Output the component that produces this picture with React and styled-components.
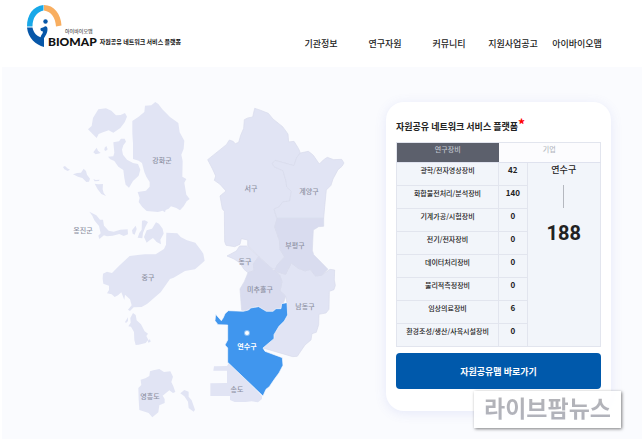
import React from 'react';
import styled, { createGlobalStyle } from 'styled-components';


const GlobalStyle = createGlobalStyle`
    * {
        box-sizing: border-box;
    }

    body {
        margin: 0;
        background: #fff;
        color: #222;
        font-family: "Noto Sans CJK KR", "Noto Sans", sans-serif;
    }
`;

const Header = styled.header`
    display: flex;
    justify-content: space-between;
    align-items: flex-start;
    padding: 5px 34px 0 27px;
    height: 67px;
`;

const Logo = styled.a`
    display: flex;
    align-items: flex-end;
    color: #111;
    text-decoration: none;

    svg {
        flex: none;
        width: 35px;
        height: 42px;
        margin-right: -14px;
    }
`;

const LogoText = styled.span`
    display: flex;
    flex-direction: column;
`;

const LogoSub = styled.span`
    padding-left: 17px;
    font-size: 5px;
    line-height: 10px;
`;

const LogoName = styled.span`
    display: flex;
    align-items: center;
    gap: 3px;
    font-family: Lato, sans-serif;
    font-size: 12px;
    font-weight: 900;
    line-height: 11px;
`;

const Tagline = styled.span`
    font-family: "Noto Sans CJK KR", sans-serif;
    font-size: 6px;
    font-weight: 700;
    white-space: nowrap;
`;

const Nav = styled.nav`
    display: flex;
    padding-top: 32px;
`;

const NavLink = styled.a`
    width: 64px;
    font-size: 9px;
    font-weight: 500;
    line-height: 14px;
    text-align: center;
    white-space: nowrap;
    color: #222;
    text-decoration: none;
`;

const Main = styled.main`
    display: flex;
    justify-content: space-between;
    align-items: flex-start;
    gap: 32px;
    margin: 0 1px 0 2px;
    padding: 35px 31px 19px 58px;
    background: #fafbfe;
`;

const Map = styled.svg`
    flex: 0 1 286px;
    min-width: 0;
    height: auto;
    overflow: visible;
`;

const Area = styled.path`
    fill: ${({ tone }) => tone || '#e1e4f4'};
    stroke: ${({ edge }) => edge || 'none'};
    stroke-width: 2;
    stroke-linejoin: round;
`;

const AreaName = styled.text`
    fill: ${({ $active }) => ($active ? '#fff' : '#8d91a3')};
    font-size: 7px;
    font-weight: ${({ $active }) => ($active ? 700 : 500)};
    text-anchor: middle;
    dominant-baseline: central;
`;

const Side = styled.div`
    position: relative;
    flex: 0 0 225px;
`;

const Card = styled.section`
    padding: 17px 10px 22px;
    border-radius: 18px;
    background: #fff;
    box-shadow: 0 2px 12px rgba(90, 110, 220, 0.13);
`;

const Title = styled.h2`
    margin: 0 0 7px;
    font-size: 9px;
    font-weight: 700;
    line-height: 16px;
    white-space: nowrap;

    span {
        font-size: 14px;
        line-height: 8px;
        color: #f00;
    }
`;

const Table = styled.table`
    width: 100%;
    table-layout: fixed;
    border-collapse: collapse;
    border: 1px solid #e2e5ee;
    background: #f2f5fa;
    line-height: 12px;
    text-align: center;
`;

const Tab = styled.th`
    height: 20px;
    padding: 0;
    border-bottom: 1px solid #dfe2ee;
    background: ${({ $active }) => ($active ? '#5c606c' : '#fcfcfe')};
    vertical-align: top;

    button {
        display: block;
        width: 100%;
        padding: 0;
        border: 0;
        background: none;
        color: ${({ $active }) => ($active ? '#c0c4ce' : '#b6bac2')};
        font-family: inherit;
        font-size: 7px;
        font-weight: 500;
        line-height: 12px;
    }
`;

const Name = styled.th`
    height: 23px;
    padding: 1px 0 0;
    border: 1px solid #e2e5ee;
    font-size: 7px;
    font-weight: 500;
    white-space: nowrap;
    vertical-align: top;
`;

const Count = styled.td`
    padding: 1px 0 0;
    border: 1px solid #e2e5ee;
    font-size: 8px;
    font-weight: 700;
    vertical-align: top;
`;

const Summary = styled.td`
    padding: 0;
    vertical-align: top;
`;

const District = styled.div`
    font-size: 9px;
    font-weight: 500;
    line-height: 14px;

    &:after {
        content: "";
        display: block;
        width: 1px;
        height: 23px;
        margin: 8px auto 14px;
        background: #b5b8bf;
    }
`;

const Total = styled.strong`
    display: block;
    font-family: Roboto, sans-serif;
    font-size: 20px;
    line-height: 22px;
`;

const MapButton = styled.button`
    display: block;
    width: 100%;
    height: 36px;
    margin-top: 6px;
    padding: 0;
    border: 0;
    border-radius: 4px;
    background: #0059ab;
    color: #fff;
    font-family: inherit;
    font-size: 9px;
    font-weight: 700;
`;

const Watermark = styled.div`
    position: absolute;
    right: -10px;
    bottom: -17px;
    width: 147px;
    height: 37px;
    background: rgba(255, 255, 255, 0.9);
    box-shadow: 1px 1px 3px rgba(0, 0, 0, 0.5);
    text-align: center;

    span {
        background: linear-gradient(#b4b4b7, #b0b2bc);
        background-clip: text;
        color: transparent;
        font-size: 23px;
        font-weight: 700;
        line-height: 32px;
        white-space: nowrap;
    }
`;

const menu = ['기관정보', '연구자원', '커뮤니티', '지원사업공고', '아이바이오맵'];

const equipment = [
    ['광학/전자영상장비', 42],
    ['화합물전처리/분석장비', 140],
    ['기계가공/시험장비', 0],
    ['전기/전자장비', 0],
    ['데이터처리장비', 0],
    ['물리적측정장비', 0],
    ['임상의료장비', 6],
    ['환경조성/생산/사육시설장비', 0]
];

const islands = [
    // 강화군
    'M247 93L266 80L283 66L285 47L304 46L316 36L325 42L337 58L360 81L385 99L389 127L403 152L401 176L394 194L398 213L397 260L409 267L403 278L409 314L419 327L410 334L401 349L390 361L379 354L363 349L356 356L347 360L345 367L338 362L324 366L290 363L277 351L266 336L269 324L263 306L288 302L299 290L299 276L289 260L283 246L276 219L266 212L249 207L249 160L247 130Z',
    'M114 118L125 108L129 84L145 58L168 55L184 62L198 76L212 75L225 69L231 80L224 97L211 114L190 128L176 121L159 127L146 132L140 144L128 132Z',
    'M190 157L207 154L213 146L224 146L228 155L220 166L216 179L219 194L231 209L249 219L264 222L271 239L266 257L249 273L237 293L227 284L223 264L220 240L205 230L193 213L181 208L174 200L190 199L193 188Z',
    'M130 187L140 173L144 182L152 189L144 191L137 193Z',
    'M164 173L169 168L173 178L167 183L163 180Z',
    'M39 231L45 228L52 235L60 239L53 243L43 238Z',
    'M69 253L81 249L93 248L101 236L108 243L111 254L120 266L117 275L109 276L97 264L84 260Z',
    'M130 267L137 270L149 269L147 273L134 274Z',
    'M134 281L145 283L159 282L158 298L161 309L168 318L154 312L143 298Z',
    // 옹진군
    'M118 365L139 376L150 389L159 389L162 407L176 422L191 425L211 419L233 418L234 433L221 438L208 432L188 437L171 439L162 436L148 447L145 437L152 430L147 408L133 391L127 377Z',
    'M246 421L257 407L260 417L254 434L248 431Z',
    'M276 392L284 391L294 396L286 411L279 429L277 445L263 443L268 429L275 419Z',
    'M282 441L290 421L306 416L318 397L327 401L338 416L341 431L331 449L333 463L320 456L309 444L299 451L290 458Z',
    // 중구
    'M349 428L382 430L392 441L411 451L436 458L453 481L460 491L464 512L449 526L435 538L405 543L371 563L360 567L332 607L292 641L275 651L251 652L240 663L234 659L245 646L240 628L225 614L223 630L214 607L204 616L194 621L185 613L171 610L177 600L177 587L160 581L158 566L159 551L171 545L186 549L209 526L239 498L263 495L284 493L317 493L342 477L348 464Z',
    'M225 696L234 682L234 693L228 699Z',
    'M235 709L242 698L241 684L249 669L257 675L260 691L273 703L284 724L294 731L289 738L295 749L287 759L266 764L257 765L253 750L252 726L243 710Z',
    'M293 752L300 748L302 755L295 758Z',
    // 영흥도
    'M265 894L274 885L272 869L286 865L298 858L300 844L310 841L328 837L342 846L361 844L369 860L364 876L370 889L376 906L369 909L358 901L338 917L344 927L344 939L328 946L325 967L307 982L296 969L268 960L266 928Z',
    'M391 910L403 900L416 905L416 920L425 931L435 959L431 965L416 954L414 935L403 919Z'
];

const mainland = [
    // 서구
    { d: 'M53 209L109 164L118 150L129 154L136 161L146 157L152 136L161 115L163 89L173 84L188 81L194 55L207 59L235 70L249 87L278 110L294 132L296 156L312 154L326 176L331 189L320 203L312 227L255 211L247 221L252 230L279 242L288 273L290 291L304 304L299 333L278 336L267 351L252 357L261 388L254 411L268 450L270 478L284 501L263 523L258 538L247 537L206 499L173 467L173 450L154 446L150 463L134 470L108 466L104 455L103 364L97 357L90 318L108 303L89 282L73 271L77 258L67 236Z' },
    // 계양구
    { d: 'M331 189L355 184L363 190L370 196L388 222L401 209L412 202L431 209L455 208L462 219L456 229L444 239L429 267L423 286L409 300L404 351L401 385L261 385L252 357L267 351L278 336L299 333L304 304L290 291L288 273L279 242L252 230L247 221L255 211L312 227L320 203Z' },
    // 동구
    { d: 'M111 498L139 483L149 468L170 468L206 500L190 522L192 542L174 548L162 538L150 519L132 507Z' },
    // 남동구
    { d: 'M252 543L287 553L304 519L325 535L345 543L361 538L376 558L395 556L420 538L434 540L433 570L436 586L432 599L418 604L417 658L408 669L387 673L386 704L379 727L366 731L363 750L345 765L322 799L308 800L219 774L250 737L255 712L292 670L291 639L287 618L270 603L276 575L269 555Z' },
    // 부평구
    { d: 'M261 385L401 385L401 409L386 410L370 420L367 481L371 494L414 538L395 556L376 558L361 538L345 543L325 535L304 519L293 540L287 553L252 543L263 523L284 501L270 478L268 450L254 411Z', tone: '#d9dcef' },
    // 미추홀구
    { d: 'M174 548L192 542L190 522L206 500L247 537L269 555L276 575L270 603L287 618L275 658L255 660L249 669L228 665L204 652L179 656L170 664L155 661L150 597L163 575Z', tone: '#d9dcef' },
    // 송도
    { d: 'M72 829L111 828L118 816L216 918L216 927L204 937L185 934L167 936L134 936L120 930L120 918L61 918L61 880L111 879L111 842L70 842Z', edge: 'none' }
];

const yeonsu = 'M77 673L94 692L100 683L105 671L115 662L160 664L176 660L182 654L206 650L229 664L249 664L258 656L273 656L275 641L291 638L293 675L283 693L267 709L252 734L252 746L219 774L225 784L277 803L279 826L267 849L253 868L238 890L228 898L219 918L113 817L113 774L105 765L113 750L113 705L84 704L75 692Z';

const labels = [
    ['강화군', 162, 160],
    ['옹진군', 83, 230],
    ['중구', 148, 277],
    ['영흥도', 150, 396],
    ['서구', 251, 188],
    ['계양구', 309, 191],
    ['부평구', 295, 245],
    ['동구', 245, 261],
    ['미추홀구', 260, 289],
    ['남동구', 305, 306],
    ['송도', 237, 389]
];

const LogoMark = () => (
    <svg viewBox="0 0 35 42" aria-hidden="true">
        <path d="M0 21.500C0 10 6 1 16.500 0V5.500C9.500 7 5.500 13 5.500 21.500Z" fill="#18a8e8" />
        <path d="M17 0C27 0 34 9 34.500 20.500L29 21.500C28.500 13 24.500 6.500 17 5.500Z" fill="#f8ae60" />
        <path d="M0 22.500H5.500C6.500 28 10 32 17 33V42C9 40 1 33 0 22.500Z" fill="#0757a8" />
        <circle cx="18.500" cy="16.500" r="2.200" fill="#0757a8" />
        <path d="M13.500 23.500C14.500 22.500 15.500 23 17 22C18.500 20.500 20.500 21.500 20.500 24C20.500 29 18 31 16.500 34L13.500 33C13.500 30 16 29 16 26.500C14.500 26.500 13 25.500 13.500 23.500Z" fill="#0757a8" />
    </svg>
);

const IncheonMap = () => (
    <Map viewBox="60 102 286 318" role="img" aria-label="인천 지도">
        <g transform="translate(50 90) scale(0.3333)">
            {islands.map((d) => <Area key={d} d={d} />)}
        </g>
        <g transform="translate(190 90) scale(0.3333)">
            {mainland.map(({ d, tone, edge }) => (
                <Area key={d} d={d} tone={tone} edge={edge || '#d8dbec'} />
            ))}
            <Area d={yeonsu} tone="#4096ee" edge="#fafbfe" />
        </g>
        {labels.map(([name, x, y]) => <AreaName key={name} x={x} y={y}>{name}</AreaName>)}
        <circle cx="247" cy="333" r="3" fill="#fff" opacity="0.4" />
        <circle cx="247" cy="333" r="2" fill="#fff" />
        <AreaName $active x="247" y="346">연수구</AreaName>
    </Map>
);

const EquipmentTable = () => (
    <Table>
        <colgroup>
            <col style={{ width: '50%' }} />
            <col style={{ width: '14%' }} />
            <col />
        </colgroup>
        <thead>
            <tr>
                <Tab $active><button type="button">연구장비</button></Tab>
                <Tab colSpan="2"><button type="button">기업</button></Tab>
            </tr>
        </thead>
        <tbody>
            {equipment.map(([name, count], i) => (
                <tr key={name}>
                    <Name scope="row">{name}</Name>
                    <Count>{count}</Count>
                    {i === 0 && (
                        <Summary rowSpan={equipment.length}>
                            <District>연수구</District>
                            <Total>188</Total>
                        </Summary>
                    )}
                </tr>
            ))}
        </tbody>
    </Table>
);

const App = () => {
    return (
        <>
            <GlobalStyle />
            <Header>
                <Logo href="#">
                    <LogoMark />
                    <LogoText>
                        <LogoSub>아이바이오맵</LogoSub>
                        <LogoName>
                            BIOMAP
                            <Tagline>자원공유 네트워크 서비스 플랫폼</Tagline>
                        </LogoName>
                    </LogoText>
                </Logo>
                <Nav>
                    {menu.map((item) => <NavLink key={item} href="#">{item}</NavLink>)}
                </Nav>
            </Header>
            <Main>
                <IncheonMap />
                <Side>
                    <Card>
                        <Title>자원공유 네트워크 서비스 플랫폼<span>*</span></Title>
                        <EquipmentTable />
                        <MapButton type="button">자원공유맵 바로가기</MapButton>
                    </Card>
                    <Watermark><span>라이브팜뉴스</span></Watermark>
                </Side>
            </Main>
        </>
    );
};

export default App;
